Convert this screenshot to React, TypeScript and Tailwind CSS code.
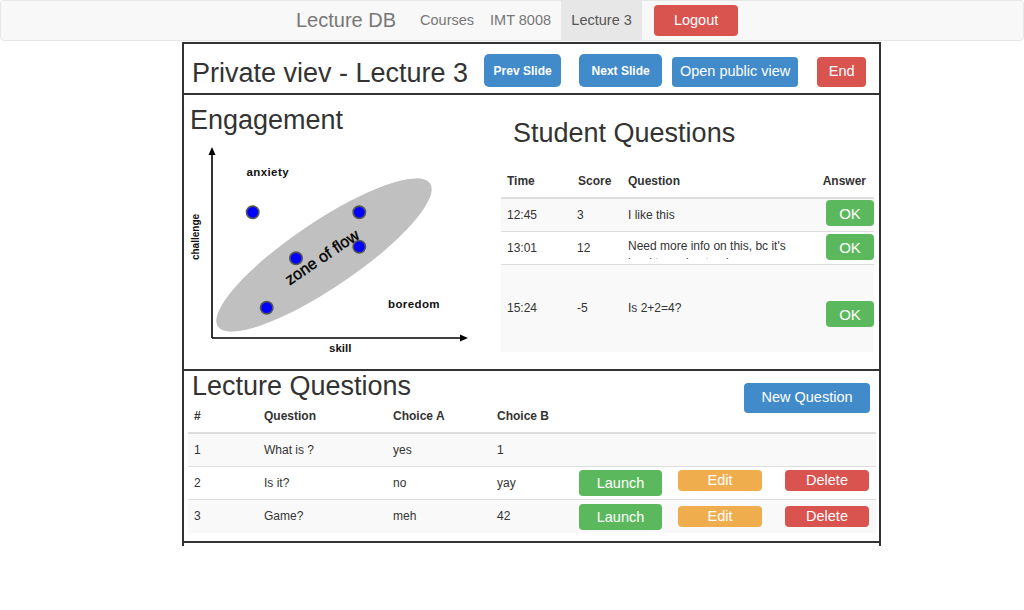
import React from 'react';

const studentQuestions = [
  { time: '12:45', score: '3', question: 'I like this', row: 'h-[33px] bg-[#f9f9f9] border-b border-[#ddd]', btn: 'mt-[1px]' },
  { time: '13:01', score: '12', question: "Need more info on this, bc it's hard to understand", row: 'h-[33px] border-b border-[#ddd]', btn: 'mt-[2px]' },
  { time: '15:24', score: '-5', question: 'Is 2+2=4?', row: 'h-[87px] bg-[#f9f9f9]', btn: 'mt-[36px]' },
];

const lectureQuestions = [
  { id: 1, question: 'What is ?', a: 'yes', b: '1', row: 'bg-[#f9f9f9] border-b border-[#ddd]', actions: false, launch: '', small: '' },
  { id: 2, question: 'Is it?', a: 'no', b: 'yay', row: 'border-b border-[#ddd]', actions: true, launch: 'mt-[3px]', small: 'mt-[3px]' },
  { id: 3, question: 'Game?', a: 'meh', b: '42', row: 'bg-[#f9f9f9]', actions: true, launch: 'mt-[4px]', small: 'mt-[6px]' },
];

function Navbar() {
  return (
    <div className="flex h-[41px] items-center rounded-[4px] border border-[#e7e7e7] bg-[#f8f8f8] pl-[280px]">
      <span className="pl-[15px] pr-[16px] text-[20px] leading-[23px] text-[#777]">Lecture DB</span>
      <span className="px-[8px] text-[14.5px] text-[#777]">Courses</span>
      <span className="pl-[8px] pr-[10px] text-[14.5px] text-[#777]">IMT 8008</span>
      <span className="flex h-full w-[81px] items-center justify-center bg-[#e7e7e7] text-[14.5px] text-[#555]">Lecture 3</span>
      <button className="ml-[12px] h-[31px] w-[84px] rounded-[4px] bg-[#d9534f] text-[14.5px] text-white">Logout</button>
    </div>
  );
}

function FlowChart() {
  return (
    <svg width="290" height="215" viewBox="0 0 290 215" className="ml-[4px] mt-[7px] block">
      <ellipse cx="136" cy="113" rx="128" ry="33" fill="#c0c0c0" transform="rotate(-34 136 113)" />
      {/* axes */}
      <line x1="24" y1="196" x2="24" y2="11" stroke="#000" strokeWidth="1.6" />
      <polygon points="24,5 20.5,13 27.5,13" fill="#000" />
      <line x1="24" y1="196" x2="273" y2="196" stroke="#000" strokeWidth="1.6" />
      <polygon points="280,196 272,192.5 272,199.5" fill="#000" />
      {/* labels */}
      <text x="58.5" y="33.5" fontSize="11.5" fontWeight="bold" letterSpacing="0.4" fill="#111">anxiety</text>
      <text x="200" y="166" fontSize="11.5" fontWeight="bold" letterSpacing="0.4" fill="#111">boredom</text>
      <text x="141" y="209.5" fontSize="11.5" fontWeight="bold" fill="#111">skill</text>
      <text transform="translate(10.5 95) rotate(-90)" textAnchor="middle" fontSize="10" fontWeight="bold" fill="#111">challenge</text>
      <text transform="translate(134 115) rotate(-34)" y="5.5" textAnchor="middle" fontSize="16" fill="#000" stroke="#000" strokeWidth="0.4">zone of flow</text>
      {/* students */}
      {[
        [64.7, 70.3],
        [171.3, 70.3],
        [171.3, 104.7],
        [108, 116.3],
        [78.7, 165.7],
      ].map(([cx, cy], i) => (
        <circle key={i} cx={cx} cy={cy} r="6.2" fill="#0000ff" stroke="#555" strokeWidth="1.6" />
      ))}
    </svg>
  );
}

export default function App() {
  return (
    <div className="min-h-[610px] bg-white font-['Liberation_Sans',Arial,sans-serif] text-[#333]">
      <Navbar />

      <main className="ml-[182px] mt-px w-[699px] border-x-2 border-t-2 border-[#333] pb-[3px]">
        {/* Header */}
        <div className="flex h-[51px] items-end border-b-2 border-[#333] pb-[6px] pl-[8px]">
          <h1 className="text-[27px] leading-[28px]">Private viev - Lecture 3</h1>
          <button className="ml-[16px] h-[33px] w-[77px] rounded-[5px] bg-[#428bca] text-[12px] font-bold text-white">Prev Slide</button>
          <button className="ml-[18px] h-[33px] w-[83px] rounded-[5px] bg-[#428bca] text-[12px] font-bold text-white">Next Slide</button>
          <button className="ml-[10px] h-[30px] w-[126px] rounded-[4px] bg-[#428bca] text-[14.5px] text-white">Open public view</button>
          <button className="ml-[19px] h-[30px] w-[49px] rounded-[4px] bg-[#d9534f] text-[14.5px] text-white">End</button>
        </div>

        {/* Engagement + student questions */}
        <div className="flex h-[276px] border-b-2 border-[#333]">
          <div className="w-[317px] pt-[10px]">
            <h2 className="pl-[6px] text-[27px] leading-[30px]">Engagement</h2>
            <FlowChart />
          </div>
          <div className="w-[377px] pt-[23px]">
            <h2 className="pl-[12px] text-[27px] leading-[30px]">Student Questions</h2>
            <div className="mt-[17px] w-[373px] text-[12px] leading-[17px]">
              <div className="flex h-[34px] items-center border-b-2 border-[#ddd] pt-px font-bold">
                <div className="w-[71px] pl-[6px]">Time</div>
                <div className="w-[50px] pl-[6px]">Score</div>
                <div className="w-[192px] pl-[6px]">Question</div>
                <div className="w-[60px] pr-[8px] text-right">Answer</div>
              </div>
              {studentQuestions.map((q) => (
                <div key={q.time} className={`flex items-center ${q.row}`}>
                  <div className="w-[71px] pl-[6px]">{q.time}</div>
                  <div className="w-[50px] pl-[5px]">{q.score}</div>
                  <div className="w-[192px] px-[6px]">
                    <div className="max-h-[21px] overflow-hidden">{q.question}</div>
                  </div>
                  <div className="flex w-[60px] justify-end self-start">
                    <button className={`h-[26px] w-[48px] rounded-[4px] bg-[#5cb85c] text-[15px] text-white ${q.btn}`}>OK</button>
                  </div>
                </div>
              ))}
            </div>
          </div>
        </div>

        {/* Lecture questions */}
        <div className="relative border-b-2 border-[#333] pb-[8px]">
          <h2 className="pl-[8px] text-[27px] leading-[30px]">Lecture Questions</h2>
          <button className="absolute right-[9px] top-[12px] h-[30px] w-[126px] rounded-[4px] bg-[#428bca] text-[14.5px] text-white">New Question</button>
          <div className="ml-[4px] w-[688px] text-[12px] leading-[17px]">
            <div className="grid h-[33px] grid-cols-[70px_129px_104px_82px_99px_107px_97px] items-center border-b-2 border-[#ddd] font-bold">
              <div className="px-[6px]">#</div>
              <div className="px-[6px]">Question</div>
              <div className="px-[6px]">Choice A</div>
              <div className="px-[6px]">Choice B</div>
              <div />
              <div />
              <div />
            </div>
            {lectureQuestions.map((q) => (
              <div key={q.id} className={`grid h-[33px] grid-cols-[70px_129px_104px_82px_99px_107px_97px] items-center ${q.row}`}>
                <div className="px-[6px]">{q.id}</div>
                <div className="px-[6px]">{q.question}</div>
                <div className="px-[6px]">{q.a}</div>
                <div className="px-[6px]">{q.b}</div>
                {q.actions ? (
                  <>
                    <div className="self-start px-[6px]">
                      <button className={`h-[26px] w-[83px] rounded-[4px] bg-[#5cb85c] text-[14.5px] leading-[26px] text-white ${q.launch}`}>Launch</button>
                    </div>
                    <div className="self-start px-[6px]">
                      <button className={`h-[21px] w-[84px] rounded-[4px] bg-[#f0ad4e] text-[14.5px] leading-[21px] text-white ${q.small}`}>Edit</button>
                    </div>
                    <div className="self-start px-[6px]">
                      <button className={`h-[21px] w-[84px] rounded-[4px] bg-[#d9534f] text-[14.5px] leading-[21px] text-white ${q.small}`}>Delete</button>
                    </div>
                  </>
                ) : (
                  <>
                    <div />
                    <div />
                    <div />
                  </>
                )}
              </div>
            ))}
          </div>
        </div>
      </main>
    </div>
  );
}
